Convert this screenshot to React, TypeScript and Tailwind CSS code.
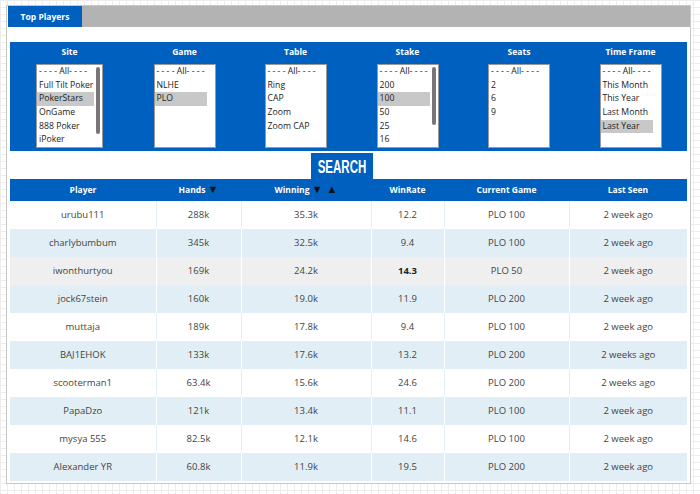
import React from "react";

const BLUE = "bg-[#0060bf]";

type LB = { items: string[]; selected: number; w: string; scroll?: string };

function ListBox({ items, selected, w, scroll }: LB) {
  return (
    <div className={`relative ${w} h-[84px] border border-[#9a9a9a] bg-white overflow-hidden`}>
      {items.map((it, i) => (
        <div
          key={i}
          className={`h-[13.7px] leading-[13.7px] pl-[2px] mr-[8px] whitespace-nowrap text-[8.7px] text-[#222] ${
            i === selected ? "bg-[#c8c8c8]" : ""
          }`}
        >
          {it}
        </div>
      ))}
      {scroll && (
        <div className={`absolute right-[2px] top-[2px] w-[4px] ${scroll} rounded-[2px] bg-[#777]`} />
      )}
    </div>
  );
}

const filters: { label: string; col: string; lb: LB }[] = [
  {
    label: "Site",
    col: "w-[119px]",
    lb: {
      items: ["- - - - All- - - -", "Full Tilt Poker", "PokerStars", "OnGame", "888 Poker", "iPoker"],
      selected: 2,
      w: "w-[67px]",
      scroll: "h-[67px]",
    },
  },
  {
    label: "Game",
    col: "w-[111px]",
    lb: { items: ["- - - - All- - - -", "NLHE", "PLO"], selected: 2, w: "w-[62px]" },
  },
  {
    label: "Table",
    col: "w-[111px]",
    lb: { items: ["- - - - All- - - -", "Ring", "CAP", "Zoom", "Zoom CAP"], selected: -1, w: "w-[62px]" },
  },
  {
    label: "Stake",
    col: "w-[113px]",
    lb: {
      items: ["- - - - All- - - -", "200", "100", "50", "25", "16"],
      selected: 2,
      w: "w-[62px]",
      scroll: "h-[58px]",
    },
  },
  {
    label: "Seats",
    col: "w-[110px]",
    lb: { items: ["- - - - All- - - -", "2", "6", "9"], selected: -1, w: "w-[62px]" },
  },
  {
    label: "Time Frame",
    col: "w-[113px]",
    lb: {
      items: ["- - - - All- - - -", "This Month", "This Year", "Last Month", "Last Year"],
      selected: 4,
      w: "w-[62px]",
    },
  },
];

const rows: string[][] = [
  ["urubu111", "288k", "35.3k", "12.2", "PLO 100", "2 week ago"],
  ["charlybumbum", "345k", "32.5k", "9.4", "PLO 100", "2 week ago"],
  ["iwonthurtyou", "169k", "24.2k", "14.3", "PLO 50", "2 week ago"],
  ["jock67stein", "160k", "19.0k", "11.9", "PLO 200", "2 week ago"],
  ["muttaja", "189k", "17.8k", "9.4", "PLO 100", "2 week ago"],
  ["BAJ1EHOK", "133k", "17.6k", "13.2", "PLO 200", "2 weeks ago"],
  ["scooterman1", "63.4k", "15.6k", "24.6", "PLO 200", "2 weeks ago"],
  ["PapaDzo", "121k", "13.4k", "11.1", "PLO 100", "2 week ago"],
  ["mysya 555", "82.5k", "12.1k", "14.6", "PLO 100", "2 week ago"],
  ["Alexander YR", "60.8k", "11.9k", "19.5", "PLO 200", "2 week ago"],
];

const rowStyle = [
  "bg-white [&>td]:border-[#e1eef6]",
  "bg-[#e1eef6] [&>td]:border-white",
  "bg-[#efefef] [&>td]:border-white",
  "bg-[#e1eef6] [&>td]:border-white",
  "bg-white [&>td]:border-[#e1eef6]",
  "bg-[#e1eef6] [&>td]:border-white",
  "bg-white [&>td]:border-[#e1eef6]",
  "bg-[#e1eef6] [&>td]:border-white",
  "bg-white [&>td]:border-[#e1eef6]",
  "bg-[#e1eef6] [&>td]:border-white",
];

const colW = ["w-[146px]", "w-[85px]", "w-[130px]", "w-[73px]", "w-[125px]", "w-[118px]"];

export default function App() {
  return (
    <div
      className="w-[700px] h-[494px] overflow-hidden pt-[5px] pl-[6px] bg-white bg-[linear-gradient(#ededed_1px,transparent_1px),linear-gradient(90deg,#ededed_1px,transparent_1px)] bg-[size:7px_7px]"
      style={{ fontFamily: '"Open Sans", "Noto Sans", sans-serif' }}
    >
      <div className="w-[685px] h-[479px] border border-[#c8c8c8] bg-white pl-[3px] pr-[3px]">
        <div className="-ml-[2px] mr-[-3px] h-[21px] bg-[#b3b3b3] flex">
          <div className={`w-[74px] h-[21px] ${BLUE} text-white font-bold text-[8.5px] leading-[21px] text-center`}>
            Top Players
          </div>
        </div>
        <div className="h-[15px]" />
        <div className={`${BLUE} h-[109px] flex pt-[4px]`}>
          {filters.map((f) => (
            <div key={f.label} className={`${f.col} flex flex-col items-center`}>
              <div className="h-[12px] leading-[12px] text-white font-bold text-[8.5px] mb-[6px]">{f.label}</div>
              <ListBox {...f.lb} />
            </div>
          ))}
        </div>
        <div className="h-[28px] pt-[2px] pl-[301px]">
          <div className={`w-[62px] h-[26px] ${BLUE} flex items-center justify-center overflow-hidden`}>
            <span
              className="inline-block text-white font-bold text-[18px] leading-none scale-x-[0.64] pt-[1px]"
              style={{ fontFamily: '"Liberation Sans", Arial, sans-serif' }}
            >
              SEARCH
            </span>
          </div>
        </div>
        <table className="w-[677px] table-fixed border-collapse">
          <thead>
            <tr className={`${BLUE} h-[22px] text-white font-bold text-[8.5px]`}>
              <th className={`${colW[0]} font-bold`}>Player</th>
              <th className={`${colW[1]} font-bold`}>
                Hands <span className="text-[#111] text-[11px] leading-none">▼</span>
              </th>
              <th className={`${colW[2]} font-bold`}>
                Winning <span className="text-[#111] text-[11px] leading-none">▼</span>
                <span className="text-[#111] text-[11px] leading-none ml-[4px]">▲</span>
              </th>
              <th className={`${colW[3]} font-bold`}>WinRate</th>
              <th className={`${colW[4]} font-bold`}>Current Game</th>
              <th className={`${colW[5]} font-bold`}>Last Seen</th>
            </tr>
          </thead>
          <tbody>
            {rows.map((r, i) => (
              <tr key={i} className={`h-[28px] text-[9.5px] text-[#444] ${rowStyle[i]}`}>
                {r.map((c, j) => (
                  <td
                    key={j}
                    className={`text-center p-0 ${j > 0 ? "border-l" : ""} ${
                      i === 2 && j === 3 ? "font-bold text-[#222]" : ""
                    }`}
                  >
                    {c}
                  </td>
                ))}
              </tr>
            ))}
          </tbody>
        </table>
      </div>
    </div>
  );
}
